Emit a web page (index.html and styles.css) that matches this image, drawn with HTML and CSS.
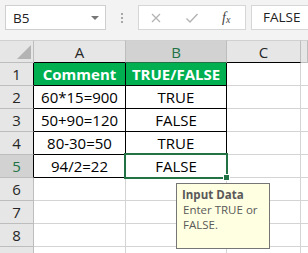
FILE: index.html
```html
<!DOCTYPE html>
<html>
<head>
<meta charset="utf-8">
<link rel="stylesheet" href="styles.css">
</head>
<body>
<div class="app">
  <div class="fbar">
    <div class="namebox"><span>B5</span><span class="caret"></span></div>
    <div class="dots"><i></i><i></i><i></i></div>
    <div class="btns">
      <svg class="ic" width="12" height="12" viewBox="0 0 12 12"><path d="M2 2L10 10M10 2L2 10" stroke="#b3b3b3" stroke-width="1.3" fill="none"/></svg>
      <svg class="ic ok" width="14" height="12" viewBox="0 0 14 12"><path d="M1.5 6.5L5 10L12.5 2" stroke="#b3b3b3" stroke-width="1.4" fill="none"/></svg>
      <span class="fx">f<sub>x</sub></span>
    </div>
    <div class="valbox">FALSE</div>
  </div>
  <div class="sheet">
    <div class="corner"><span class="tri"></span></div>
    <div class="ch">A</div>
    <div class="ch selh">B</div>
    <div class="ch">C</div>
    <div class="ch last"></div>

    <div class="rh blk">1</div>
    <div class="c hd">Comment</div>
    <div class="c hd">TRUE/FALSE</div>
    <div class="c"></div>
    <div class="c last"></div>

    <div class="rh blk">2</div>
    <div class="c dt">60*15=900</div>
    <div class="c dt">TRUE</div>
    <div class="c"></div>
    <div class="c last"></div>

    <div class="rh blk">3</div>
    <div class="c dt">50+90=120</div>
    <div class="c dt">FALSE</div>
    <div class="c"></div>
    <div class="c last"></div>

    <div class="rh blk">4</div>
    <div class="c dt">80-30=50</div>
    <div class="c dt">TRUE</div>
    <div class="c"></div>
    <div class="c last"></div>

    <div class="rh blk selr">5</div>
    <div class="c dt">94/2=22</div>
    <div class="c dt sel">FALSE<span class="handle"></span>
      <div class="tip"><b>Input Data</b><span>Enter TRUE or FALSE.</span></div>
    </div>
    <div class="c"></div>
    <div class="c last"></div>

    <div class="rh">6</div>
    <div class="c"></div><div class="c"></div><div class="c"></div><div class="c last"></div>
    <div class="rh">7</div>
    <div class="c"></div><div class="c"></div><div class="c"></div><div class="c last"></div>
    <div class="rh">8</div>
    <div class="c"></div><div class="c"></div><div class="c"></div><div class="c last"></div>
    <div class="rh"></div>
    <div class="c"></div><div class="c"></div><div class="c"></div><div class="c last"></div>
  </div>
</div>
</body>
</html>
```
FILE: styles.css
```css
html, body {
  margin: 0;
  padding: 0;
  background: #ffffff;
}
body {
  width: 308px;
  height: 253px;
  overflow: hidden;
  font-family: "Open Sans", "Liberation Sans", sans-serif;
}
.app {
  width: 308px;
  height: 253px;
  overflow: hidden;
}
.fbar {
  height: 40px;
  box-sizing: border-box;
  background: #f3f3f3;
  padding: 5px 0 0 5px;
  display: flex;
  align-items: flex-start;
}
.namebox {
  width: 101px;
  height: 25px;
  box-sizing: border-box;
  background: #fff;
  border: 1px solid #cfcfcf;
  display: flex;
  align-items: center;
  justify-content: space-between;
  padding: 0 6px 0 7px;
  font-size: 13.5px;
  color: #222;
}
.caret {
  width: 0;
  height: 0;
  border-left: 4px solid transparent;
  border-right: 4px solid transparent;
  border-top: 4px solid #777;
}
.dots {
  width: 32px;
  height: 25px;
  display: flex;
  flex-direction: column;
  align-items: center;
  justify-content: center;
  gap: 2px;
}
.dots i {
  width: 2px;
  height: 2px;
  background: #a8a8a8;
}
.btns {
  width: 108px;
  height: 25px;
  box-sizing: border-box;
  background: #fff;
  border: 1px solid #d6d6d6;
  display: flex;
  align-items: center;
  padding: 0 0 0 11px;
}
.ic.ok {
  margin-left: 23px;
}
.fx {
  margin-left: 23px;
  font-family: "Liberation Serif", serif;
  font-style: italic;
  font-size: 14px;
  color: #444;
}
.fx sub {
  font-size: 10px;
  vertical-align: -1px;
}
.valbox {
  margin-left: 5px;
  flex: 1;
  height: 25px;
  box-sizing: border-box;
  background: #fff;
  border: 1px solid #d6d6d6;
  border-right: 0;
  padding-left: 11px;
  font-size: 13.5px;
  line-height: 23px;
  color: #222;
}
.sheet {
  display: grid;
  grid-template-columns: 34px 92px 101px 74px 1fr;
  grid-template-rows: 23px repeat(9, 23px);
  background: #fff;
}
.sheet > div {
  box-sizing: border-box;
  border-right: 1px solid #d4d4d4;
  border-bottom: 1px solid #d4d4d4;
  display: flex;
  align-items: center;
  justify-content: center;
}
.corner, .ch, .rh {
  background: #e6e6e6;
}
.sheet > .corner {
  border-right-color: #bdbdbd;
  border-bottom-color: #bdbdbd;
  border-top: 1px solid #d0d0d0;
  position: relative;
}
.tri {
  position: absolute;
  right: 2px;
  bottom: 3px;
  width: 0;
  height: 0;
  border-left: 14px solid transparent;
  border-bottom: 14px solid #b4b4b4;
}
.sheet > .ch {
  border-top: 1px solid #d0d0d0;
  border-right-color: #bdbdbd;
  border-bottom-color: #000;
  font-size: 15px;
  color: #262626;
}
.sheet > .ch.last {
  border-bottom-color: #bdbdbd;
}
.sheet > .selh {
  background: #d2d2d2;
  color: #217346;
  border-bottom-color: #217346;
}
.sheet > .rh {
  border-right-color: #bdbdbd;
  border-bottom-color: #bdbdbd;
  font-size: 15px;
  color: #262626;
}
.sheet > .rh.blk {
  border-right-color: #000;
}
.sheet > .selr {
  background: #d2d2d2;
  color: #217346;
}
.sheet > .c.last {
  border-right: 0;
}
.sheet > .hd {
  background: #00b050;
  color: #fff;
  font-weight: 700;
  font-size: 15px;
  border-right-color: #000;
  border-bottom-color: #000;
}
.sheet > .dt {
  font-size: 15px;
  color: #000;
  border-right-color: #000;
  border-bottom-color: #000;
}
.sheet > .sel {
  position: relative;
}
.sel::after {
  content: "";
  position: absolute;
  left: -2px;
  top: -2px;
  right: -2px;
  bottom: -2px;
  border: 2px solid #217346;
}
.handle {
  position: absolute;
  right: -4px;
  bottom: -4px;
  width: 5px;
  height: 5px;
  background: #217346;
  border: 1px solid #fff;
  z-index: 2;
}
.tip {
  position: absolute;
  left: 50px;
  top: 28px;
  width: 94px;
  height: 66px;
  box-sizing: border-box;
  background: #ffffe1;
  border: 1px solid #767676;
  padding: 3px 5px 0 5px;
  font-size: 11.5px;
  line-height: 15px;
  color: #595959;
  z-index: 3;
  display: flex;
  flex-direction: column;
  align-items: flex-start;
  text-align: left;
}
.tip b {
  font-weight: 700;
}
.tip span {
  padding-left: 1px;
}
```
